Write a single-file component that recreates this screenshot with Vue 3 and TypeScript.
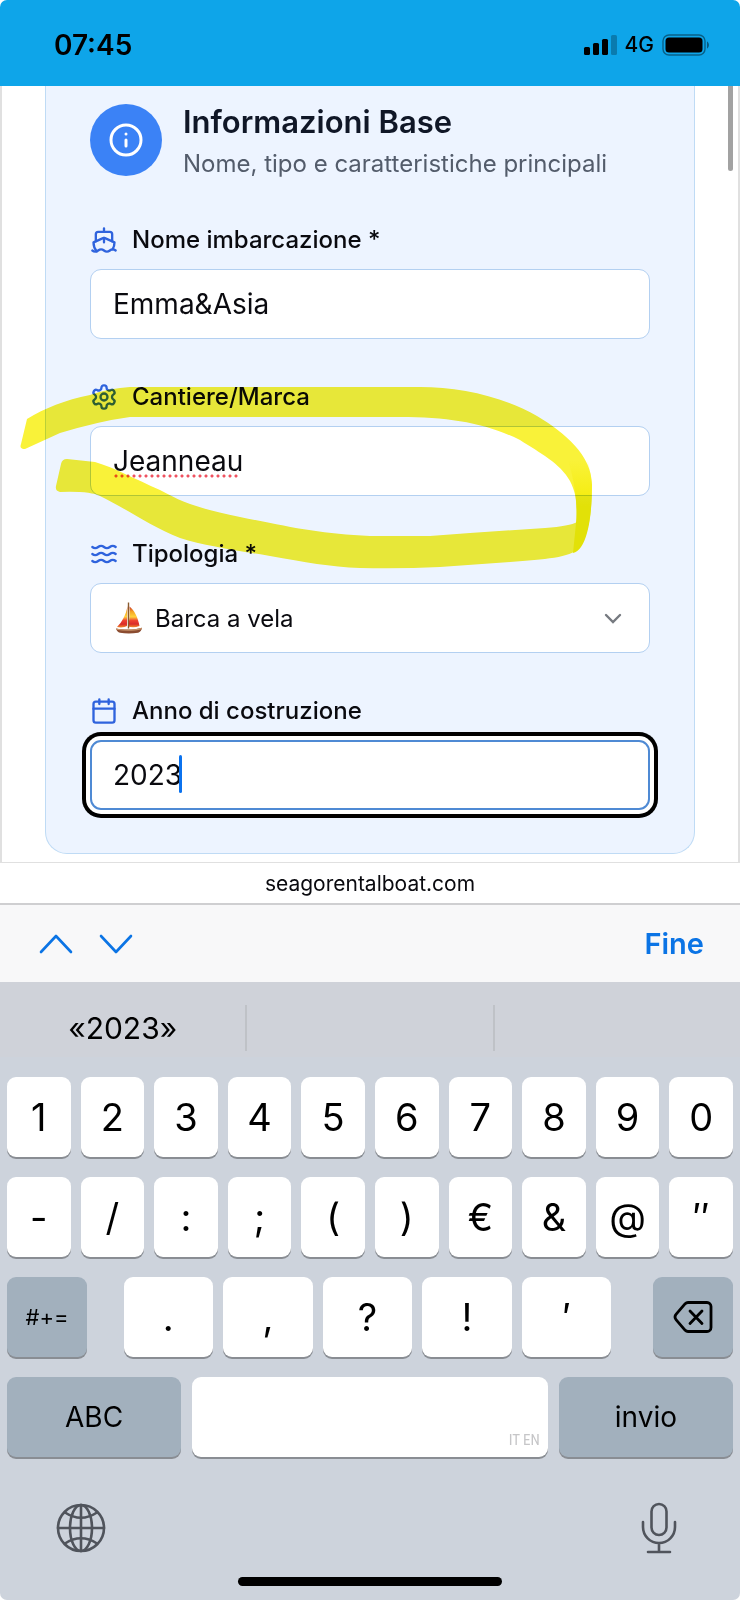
<script setup lang="ts">
import { ref } from 'vue'

const boatName = ref('Emma&Asia')
const brand = ref('Jeanneau')
const boatType = ref('vela')
const year = ref('2023')

const digits: string[] = ['1', '2', '3', '4', '5', '6', '7', '8', '9', '0']
const symbols: string[] = ['-', '/', ':', ';', '(', ')', '€', '&', '@', '″']
const punctuation: string[] = ['.', ',', '?', '!', '′']
</script>

<template>
  <div class="phone">
    <header class="status">
      <span class="time">07:45</span>
      <div class="indicators">
        <svg class="signal" viewBox="0 0 34 22" aria-hidden="true">
          <rect x="1" y="13" width="6" height="8" rx="1.5" />
          <rect x="10" y="9" width="6" height="12" rx="1.5" />
          <rect x="19" y="5" width="6" height="16" rx="1.5" />
          <rect x="28" y="1" width="6" height="20" rx="1.5" opacity="0.25" />
        </svg>
        <span class="network">4G</span>
        <svg class="battery" viewBox="0 0 48 22" aria-hidden="true">
          <rect x="1" y="1" width="42" height="20" rx="6" fill="none" stroke="#000" stroke-width="1.4" opacity="0.42" />
          <rect x="3.500" y="3.500" width="37" height="15" rx="3.500" />
          <path d="M45 7.500c2.600 1.200 2.600 5.800 0 7z" opacity="0.45" />
        </svg>
      </div>
    </header>

    <main class="page">
      <section class="card">
        <div class="card-head">
          <span class="badge">
            <svg viewBox="0 0 24 24" aria-hidden="true">
              <circle cx="12" cy="12" r="10" />
              <path d="M12 16v-4M12 8h.01" />
            </svg>
          </span>
          <div class="headings">
            <h1>Informazioni Base</h1>
            <p>Nome, tipo e caratteristiche principali</p>
          </div>
        </div>

        <div class="field">
          <label for="boat-name">
            <svg viewBox="0 0 24 24" aria-hidden="true">
              <path d="M12 10.189V14M12 2v3M19 13V7a2 2 0 0 0-2-2H7a2 2 0 0 0-2 2v6" />
              <path d="M19.380 20A11.600 11.600 0 0 0 21 14l-8.188-3.639a2 2 0 0 0-1.624 0L3 14a11.600 11.600 0 0 0 2.810 7.760" />
              <path d="M2 21c.6.5 1.200 1 2.500 1 2.500 0 2.500-2 5-2 1.300 0 1.900.5 2.500 1s1.200 1 2.500 1c2.500 0 2.500-2 5-2 1.300 0 1.900.5 2.500 1" />
            </svg>
            Nome imbarcazione *
          </label>
          <div class="control"><input id="boat-name" v-model="boatName" type="text" spellcheck="false" /></div>
        </div>

        <div class="field">
          <label for="brand">
            <svg viewBox="0 0 24 24" aria-hidden="true">
              <path d="M12.220 2h-.44a2 2 0 0 0-2 2v.18a2 2 0 0 1-1 1.730l-.43.25a2 2 0 0 1-2 0l-.15-.08a2 2 0 0 0-2.730.73l-.22.38a2 2 0 0 0 .73 2.730l.15.1a2 2 0 0 1 1 1.720v.51a2 2 0 0 1-1 1.740l-.15.09a2 2 0 0 0-.73 2.730l.22.38a2 2 0 0 0 2.730.73l.15-.08a2 2 0 0 1 2 0l.43.25a2 2 0 0 1 1 1.730V20a2 2 0 0 0 2 2h.44a2 2 0 0 0 2-2v-.18a2 2 0 0 1 1-1.730l.43-.25a2 2 0 0 1 2 0l.15.08a2 2 0 0 0 2.730-.73l.22-.39a2 2 0 0 0-.73-2.730l-.15-.08a2 2 0 0 1-1-1.740v-.5a2 2 0 0 1 1-1.740l.15-.09a2 2 0 0 0 .73-2.730l-.22-.38a2 2 0 0 0-2.730-.73l-.15.08a2 2 0 0 1-2 0l-.43-.25a2 2 0 0 1-1-1.730V4a2 2 0 0 0-2-2z" />
              <circle cx="12" cy="12" r="3" />
            </svg>
            Cantiere/Marca
          </label>
          <div class="control">
            <input id="brand" v-model="brand" type="text" spellcheck="false" />
            <span class="squiggle"></span>
          </div>
        </div>

        <div class="field">
          <label for="boat-type">
            <svg viewBox="0 0 24 24" aria-hidden="true">
              <path d="M2 6c.6.5 1.200 1 2.500 1C7 7 7 5 9.500 5c2.600 0 2.400 2 5 2 2.500 0 2.500-2 5-2 1.300 0 1.900.5 2.500 1" />
              <path d="M2 12c.6.5 1.200 1 2.500 1 2.500 0 2.500-2 5-2 2.600 0 2.400 2 5 2 2.500 0 2.500-2 5-2 1.300 0 1.900.5 2.500 1" />
              <path d="M2 18c.6.5 1.200 1 2.500 1 2.500 0 2.500-2 5-2 2.600 0 2.400 2 5 2 2.500 0 2.500-2 5-2 1.300 0 1.900.5 2.500 1" />
            </svg>
            Tipologia *
          </label>
          <div class="control">
            <select id="boat-type" v-model="boatType">
              <option value="vela">Barca a vela</option>
            </select>
            <svg class="sailboat" viewBox="0 0 28 32" aria-hidden="true">
              <defs>
                <linearGradient id="sail" x1="0" y1="0" x2="0" y2="1">
                  <stop offset="0" stop-color="#c9302c" />
                  <stop offset="0.25" stop-color="#f5a623" />
                  <stop offset="0.5" stop-color="#ffd23c" />
                  <stop offset="0.68" stop-color="#ee4130" />
                  <stop offset="0.85" stop-color="#d92b2b" />
                  <stop offset="1" stop-color="#f28a2b" />
                </linearGradient>
              </defs>
              <path d="M12.500 4C11 13 7 20 2 25c4 .8 8 .3 10-1z" fill="url(#sail)" />
              <path d="M14.500 4.500C19 8 23 15 24.500 24c-4 1.500-8 1.500-11.500 .5 1.500-6 2-13 1.500-20z" fill="url(#sail)" />
              <path d="M13.500 0.500v26" stroke="#8a5a2c" stroke-width="1.400" fill="none" />
              <path d="M1 26.500c8 1.600 18 1.600 26-.8-.4 2.500-1.800 4.300-3.800 5.100-6 1-13 1-18.200 0-2-.6-3.500-2.300-4-4.300z" fill="#8b4c30" />
              <path d="M1 26.500c8 1.600 18 1.600 26-.8l-.4 1.500c-8 2-17 2-25.200.6z" fill="#c8936a" />
            </svg>
            <svg class="arrow" viewBox="0 0 18 12" aria-hidden="true"><path d="M2 2l7 7 7-7" /></svg>
          </div>
        </div>

        <div class="field">
          <label for="year">
            <svg viewBox="0 0 24 24" aria-hidden="true">
              <path d="M8 2v4M16 2v4M3 10h18" />
              <rect x="3" y="4" width="18" height="18" rx="2" />
            </svg>
            Anno di costruzione
          </label>
          <div class="control focused">
            <input id="year" v-model="year" type="text" inputmode="numeric" spellcheck="false" />
            <span class="caret"></span>
          </div>
        </div>
      </section>
      <span class="scrollbar"></span>
      <svg class="marker" viewBox="0 86 740 777" aria-hidden="true">
        <defs>
          <linearGradient id="ink" x1="0" y1="0" x2="0" y2="1">
            <stop offset="0" stop-color="#f4ec08" stop-opacity="0" />
            <stop offset="0.5" stop-color="#f4ec08" />
          </linearGradient>
        </defs>
        <path d="M27 419C45 408 65 400 90 395Q110 388 130 387H420C460 387 505 397 537 416C565 433 592 455 592 485C592 510 589 535 579 548C570 558 545 559 510 562L440 567Q400 569 360 568C330 567 305 562 270 556C235 550 205 546 180 538C150 526 125 508 100 496Q90 491 60 492Q55 491 56 486L61 464Q62 459 67 459L95 462C115 468 135 479 160 490C185 504 205 510 240 517C290 527 320 534 370 536H430L470 533L545 528Q570 526 577 522C577 505 577 495 570 481C560 463 540 453 520 440C485 423 450 417 400 417H130Q100 421 60 433L25 449Q19 449 21 444Z" />
        <path d="M568 460C577 490 577 510 576 523L573 553Q582 551 587 533Q592 515 592 484L588 460Z" fill="url(#ink)" />
      </svg>
    </main>

    <div class="address">seagorentalboat.com</div>

    <nav class="toolbar">
      <div class="steps">
        <button type="button" aria-label="Campo precedente">
          <svg viewBox="0 0 34 20" aria-hidden="true"><path d="M2 18L17 2l15 16" /></svg>
        </button>
        <button type="button" aria-label="Campo successivo">
          <svg viewBox="0 0 34 20" aria-hidden="true"><path d="M2 2l15 16L32 2" /></svg>
        </button>
      </div>
      <button type="button" class="done">Fine</button>
    </nav>

    <section class="keyboard">
      <div class="suggestions">
        <button type="button">«2023»</button>
        <button type="button" aria-label="Suggerimento 2"></button>
        <button type="button" aria-label="Suggerimento 3"></button>
      </div>
      <div class="rows">
        <div class="row">
          <button v-for="k in digits" :key="k" type="button" class="key">{{ k }}</button>
        </div>
        <div class="row">
          <button v-for="k in symbols" :key="k" type="button" class="key">{{ k }}</button>
        </div>
        <div class="row spread">
          <button type="button" class="key dark side">#+=</button>
          <div class="row middle">
            <button v-for="k in punctuation" :key="k" type="button" class="key">{{ k }}</button>
          </div>
          <button type="button" class="key dark side" aria-label="Cancella">
            <svg class="delete" viewBox="0 0 40 34" aria-hidden="true">
              <path d="M15 2.500h19a4 4 0 0 1 4 4v21a4 4 0 0 1-4 4H15q-1.600 0-2.800-1.200L3.200 19.800q-2.400-2.800 0-5.600l9-10.500Q13.400 2.500 15 2.500z" />
              <path d="M17 11l12 12.500M29 11L17 23.500" />
            </svg>
          </button>
        </div>
        <div class="row bottom">
          <button type="button" class="key dark wide">ABC</button>
          <button type="button" class="key space" aria-label="Spazio"><span>IT EN</span></button>
          <button type="button" class="key dark wide">invio</button>
        </div>
      </div>
      <div class="system">
        <button type="button" aria-label="Cambia tastiera">
          <svg class="globe" viewBox="0 0 50 50" aria-hidden="true">
            <circle cx="25" cy="25" r="23" />
            <path d="M25 2v46M2 25h46" />
            <ellipse cx="25" cy="25" rx="11" ry="23" />
            <path d="M9 9.500Q25 20 41 9.500M9 40.500Q25 30 41 40.500" />
          </svg>
        </button>
        <button type="button" aria-label="Dettatura">
          <svg class="mic" viewBox="0 0 36 52" aria-hidden="true">
            <rect x="10.500" y="2" width="15" height="31" rx="7.500" />
            <path d="M2 20v5a16 16 0 0 0 32 0v-5M18 41v9M7 50h22" />
          </svg>
        </button>
      </div>
      <div class="home"></div>
    </section>
  </div>
</template>

<style>
body {
  margin: 0;
  background: #fff;
}
</style>

<style scoped>
.phone {
  display: flex;
  flex-direction: column;
  min-height: 100vh;
  box-sizing: border-box;
  border-radius: 7px;
  overflow: hidden;
  background: #fff;
  color: #0a0a0f;
  font-family: Inter, "Liberation Sans", sans-serif;
}
.phone *,
.phone *::before {
  box-sizing: border-box;
}
button {
  margin: 0;
  padding: 0;
  border: 0;
  background: none;
  color: inherit;
  font: inherit;
}
svg {
  display: block;
  flex: none;
}
.status {
  display: flex;
  align-items: center;
  justify-content: space-between;
  height: 86px;
  padding: 3px 30px 0 54px;
  background: #0ea5e9;
  color: #000;
}
.time {
  font-size: 28px;
  font-weight: 600;
}
.indicators {
  display: flex;
  align-items: center;
  gap: 8px;
}
.signal {
  width: 34px;
  height: 22px;
}
.network {
  font-size: 21px;
  font-weight: 500;
}
.battery {
  width: 48px;
  height: 22px;
}
.page {
  position: relative;
  padding: 0 43px 8px;
  border: solid #e0e0e0;
  border-width: 0 2px 1px;
}
.card {
  display: flex;
  flex-direction: column;
  gap: 44px;
  padding: 18px 44px 43px;
  border: solid #bfdbf5;
  border-width: 0 1px 1px;
  border-radius: 0 0 22px 22px;
  background: #edf4ff;
}
.card-head {
  display: flex;
  align-items: flex-start;
  gap: 21px;
}
.badge {
  display: flex;
  align-items: center;
  justify-content: center;
  width: 72px;
  height: 72px;
  border-radius: 50%;
  background: #3b82f6;
}
.badge svg {
  width: 36px;
  height: 36px;
  fill: none;
  stroke: #fff;
  stroke-width: 2;
  stroke-linecap: round;
}
.headings {
  display: flex;
  flex-direction: column;
  gap: 6px;
}
h1,
p {
  margin: 0;
  line-height: 36px;
  white-space: nowrap;
}
h1 {
  color: #101727;
  font-size: 31px;
  font-weight: 600;
}
p {
  color: #535c6b;
  font-size: 24px;
}
.field {
  display: flex;
  flex-direction: column;
  gap: 15px;
}
label {
  display: flex;
  align-items: center;
  gap: 14px;
  font-size: 24px;
  font-weight: 500;
  line-height: 28px;
}
label svg {
  width: 28px;
  height: 28px;
  fill: none;
  stroke: #2f63dd;
  stroke-width: 2;
  stroke-linecap: round;
  stroke-linejoin: round;
}
.control {
  position: relative;
}
input,
select {
  display: block;
  width: 100%;
  height: 70px;
  margin: 0;
  padding: 0 22px;
  border: 1px solid #b3d0f1;
  border-radius: 11px;
  outline: none;
  appearance: none;
  background: #fff;
  color: #0a0a0f;
  font-family: inherit;
  font-size: 28px;
}
select {
  padding-left: 64px;
  font-size: 24px;
}
.squiggle {
  position: absolute;
  bottom: 18px;
  left: 24px;
  width: 126px;
  height: 4px;
  background: radial-gradient(circle at 2px 2px, #ef5260 1px, transparent 2px) 0 0 / 6px 4px;
}
.sailboat {
  position: absolute;
  top: 19px;
  left: 25px;
  width: 28px;
  height: 32px;
}
.arrow {
  position: absolute;
  top: 30px;
  right: 28px;
  width: 18px;
  height: 12px;
  fill: none;
  stroke: #767a80;
  stroke-width: 2.4;
  stroke-linecap: round;
}
.focused input {
  border: 2px solid #4f8ad4;
  padding: 0 21px;
  box-shadow: 0 0 0 4px #fff, 0 0 0 8px #000;
}
.caret {
  position: absolute;
  top: 15px;
  left: 89px;
  width: 3px;
  height: 38px;
  border-radius: 2px;
  background: #0b72ee;
}
.scrollbar {
  position: absolute;
  top: 0;
  right: 5px;
  width: 5px;
  height: 85px;
  border-radius: 0 0 3px 3px;
  background: #a2a2a2;
}
.marker {
  position: absolute;
  top: 0;
  left: -2px;
  width: calc(100% + 4px);
  fill: #f9f239;
  mix-blend-mode: multiply;
  pointer-events: none;
}
.address {
  height: 42px;
  border-bottom: 2px solid #cfcfd1;
  background: #fff;
  font-size: 21px;
  line-height: 42px;
  text-align: center;
}
.toolbar {
  display: flex;
  align-items: center;
  justify-content: space-between;
  height: 77px;
  padding: 0 36px 0 39px;
  background: #f8f8f9;
  color: #0b74e5;
}
.steps {
  display: flex;
  gap: 26px;
}
.steps svg {
  width: 34px;
  height: 20px;
  fill: none;
  stroke: currentColor;
  stroke-width: 2.6;
  stroke-linecap: round;
  stroke-linejoin: round;
}
.done {
  font-size: 29px;
  font-weight: 600;
}
.keyboard {
  display: flex;
  flex: 1;
  flex-direction: column;
  background: #cdd3dc;
  color: #000;
}
.suggestions {
  display: flex;
  height: 95px;
  padding: 23px 0 26px;
  background: linear-gradient(#cfd2d9 75px, #cdd3dc 75px);
}
.suggestions button {
  flex: 1;
  font-size: 30px;
  font-weight: 400;
}
.suggestions button + button {
  border-left: 2px solid #bfc2c7;
}
.rows {
  display: flex;
  flex-direction: column;
  gap: 20px;
  padding: 0 7px;
}
.row {
  display: flex;
  gap: 10px;
}
.spread {
  justify-content: space-between;
}
.middle {
  flex: 0 1 488px;
  margin-right: 5px;
}
.bottom {
  gap: 11px;
}
.key {
  flex: 1 1 0;
  min-width: 0;
  height: 80px;
  border-radius: 9px;
  background: #fff;
  box-shadow: 0 2px 0 #898d93;
  font-size: 38px;
}
.dark {
  background: #a2b0bd;
}
.side {
  display: flex;
  flex: 0 0 80px;
  align-items: center;
  justify-content: center;
  font-size: 22px;
}
.delete {
  width: 40px;
  height: 34px;
  fill: none;
  stroke: #000;
  stroke-width: 2.800;
  stroke-linecap: round;
  stroke-linejoin: round;
}
.wide {
  flex: 1 1 0;
  font-size: 28px;
}
.space {
  display: flex;
  flex: 0 0 49%;
  align-items: flex-end;
  justify-content: flex-end;
  padding: 8px;
  color: #c6c6c8;
  font-family: "Roboto Condensed", Roboto, sans-serif;
  font-size: 15px;
}
.system {
  display: flex;
  justify-content: space-between;
  align-items: center;
  margin-top: 45px;
  padding: 0 63px 0 56px;
}
.system svg {
  fill: none;
  stroke: #50545c;
  stroke-width: 2.600;
  stroke-linecap: round;
}
.globe {
  width: 50px;
  height: 50px;
}
.mic {
  width: 36px;
  height: 52px;
}
.home {
  width: 264px;
  height: 9px;
  margin: auto auto 14px;
  border-radius: 5px;
  background: #000;
}
</style>
